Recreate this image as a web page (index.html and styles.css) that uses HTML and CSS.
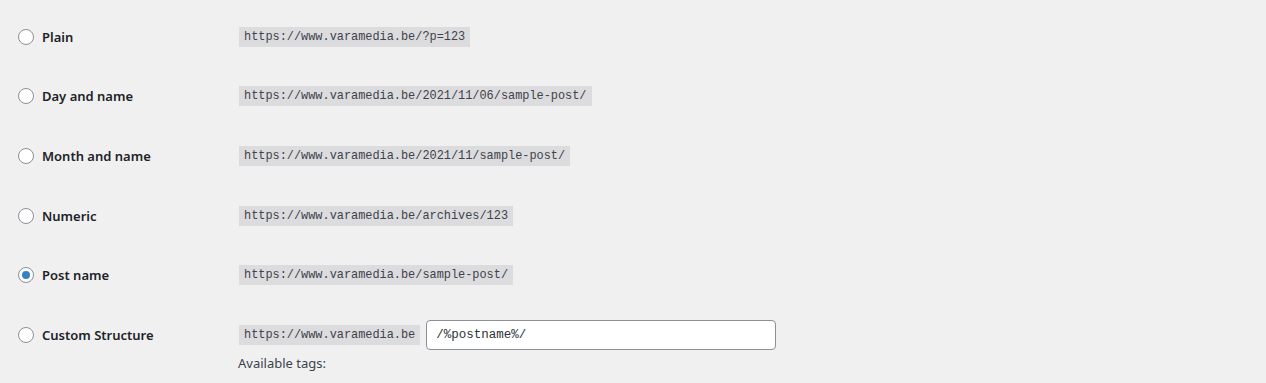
FILE: index.html
```html
<!DOCTYPE html>
<html lang="en">
<head>
  <meta charset="UTF-8" />
  <title>Permalink Settings</title>
  <link rel="stylesheet" href="styles.css">
</head>
<body>
  <div class="permalinks">
    <div class="row">
      <label class="choice"><span class="radio"></span>Plain</label>
      <div class="value"><code>https://www.varamedia.be/?p=123</code></div>
    </div>
    <div class="row">
      <label class="choice"><span class="radio"></span>Day and name</label>
      <div class="value"><code>https://www.varamedia.be/2021/11/06/sample-post/</code></div>
    </div>
    <div class="row">
      <label class="choice"><span class="radio"></span>Month and name</label>
      <div class="value"><code>https://www.varamedia.be/2021/11/sample-post/</code></div>
    </div>
    <div class="row">
      <label class="choice"><span class="radio"></span>Numeric</label>
      <div class="value"><code>https://www.varamedia.be/archives/123</code></div>
    </div>
    <div class="row">
      <label class="choice"><span class="radio checked"></span>Post name</label>
      <div class="value"><code>https://www.varamedia.be/sample-post/</code></div>
    </div>
    <div class="row">
      <label class="choice"><span class="radio"></span>Custom Structure</label>
      <div class="value">
        <code>https://www.varamedia.be</code>
        <input class="structure" type="text" value="/%postname%/" />
      </div>
    </div>
    <p class="tags">Available tags:</p>
  </div>
</body>
</html>
```

FILE: styles.css
```css
body {
  margin: 0;
  background: #f0f0f1;
  font-family: 'Noto Sans', sans-serif;
  color: #1d2327;
  overflow: hidden;
}

.permalinks {
  padding: 7px 0 0 18px;
}

.row {
  display: grid;
  grid-template-columns: 221px 1fr;
  align-items: center;
  height: 59.6px;
}

.choice {
  display: flex;
  align-items: center;
  gap: 8px;
  font-size: 13px;
  font-weight: 600;
}

.radio {
  width: 14px;
  height: 14px;
  border: 1px solid #8c8f94;
  border-radius: 50%;
  background: #fff;
  display: flex;
  justify-content: center;
  align-items: center;
}

.radio.checked::before {
  content: '';
  width: 8px;
  height: 8px;
  border-radius: 50%;
  background: #3582c4;
}

.value {
  display: flex;
  align-items: center;
  gap: 6px;
}

code {
  font-family: 'Liberation Mono', monospace;
  font-size: 11.9px;
  color: #3c434a;
  background: #dcdcde;
  padding: 4px 5px 3px;
  line-height: 13px;
}

.structure {
  width: 350px;
  height: 30px;
  box-sizing: border-box;
  border: 1px solid #8c8f94;
  border-radius: 4px;
  background: #fff;
  padding: 0 9px;
  font-family: 'Liberation Mono', monospace;
  font-size: 12.5px;
  color: #2c3338;
}

.tags {
  margin: -11px 0 0 220px;
  font-size: 13px;
  color: #3c434a;
}
```
